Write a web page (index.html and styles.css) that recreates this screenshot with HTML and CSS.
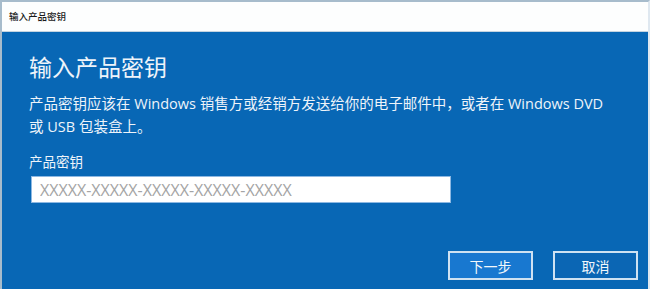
FILE: index.html
```html
<!DOCTYPE html>
<html lang="zh-CN">
<head>
    <meta charset="UTF-8">
    <title>输入产品密钥</title>
    <link rel="stylesheet" href="styles.css">
</head>
<body>
    <div class="window">
        <div class="titlebar">输入产品密钥</div>
        <div class="content">
            <h1>输入产品密钥</h1>
            <p class="desc">产品密钥应该在 Windows 销售方或经销方发送给你的电子邮件中，或者在 Windows DVD<br>或 USB 包装盒上。</p>
            <label class="field-label" for="key">产品密钥</label>
            <input class="key-input" id="key" type="text" placeholder="XXXXX-XXXXX-XXXXX-XXXXX-XXXXX">
            <div class="actions">
                <button class="btn primary">下一步</button>
                <button class="btn">取消</button>
            </div>
        </div>
    </div>
</body>
</html>
```

FILE: styles.css
```css
* {
    margin: 0;
    padding: 0;
    box-sizing: border-box;
}

body {
    font-family: "Open Sans", "Noto Sans CJK SC", sans-serif;
    background: #ffffff;
    width: 650px;
    height: 289px;
    overflow: hidden;
}

.window {
    height: 289px;
    display: flex;
    flex-direction: column;
    border: 2px solid #a7bccc;
    border-bottom: none;
    border-right-color: #dfe8f0;
}

.titlebar {
    height: 30px;
    line-height: 30px;
    padding-left: 7px;
    font-size: 9.5px;
    font-weight: 500;
    color: #1a1a1a;
    background: #fdfefe;
    border-bottom: 1px solid #c4d4e0;
}

.content {
    flex: 1;
    background: #0867b5;
    color: #eef4fa;
    padding: 18px 0 9px 27px;
    display: flex;
    flex-direction: column;
}

h1 {
    font-size: 23px;
    font-weight: normal;
    line-height: 34px;
    margin-bottom: 8px;
}

.desc {
    font-size: 14.5px;
    line-height: 23px;
    margin-bottom: 14px;
}

.field-label {
    font-size: 13.5px;
    line-height: 20px;
    margin-bottom: 4px;
}

.key-input {
    width: 420px;
    height: 27px;
    margin-left: 2px;
    border: 1px solid #8db8e2;
    background: #ffffff;
    padding-left: 8px;
    font-family: "Open Sans", sans-serif;
    font-size: 16px;
    outline: none;
}

.key-input::placeholder {
    color: #a4a4a4;
}

.actions {
    margin-top: auto;
    display: flex;
    justify-content: flex-end;
    gap: 20px;
    padding-right: 10px;
}

.btn {
    width: 85px;
    height: 29px;
    border: 2px solid #cfe2f2;
    background: #0b66b4;
    color: #f2f7fb;
    font-family: "Noto Sans CJK SC", sans-serif;
    font-size: 14px;
}

.btn.primary {
    background: #1878d0;
}
```
